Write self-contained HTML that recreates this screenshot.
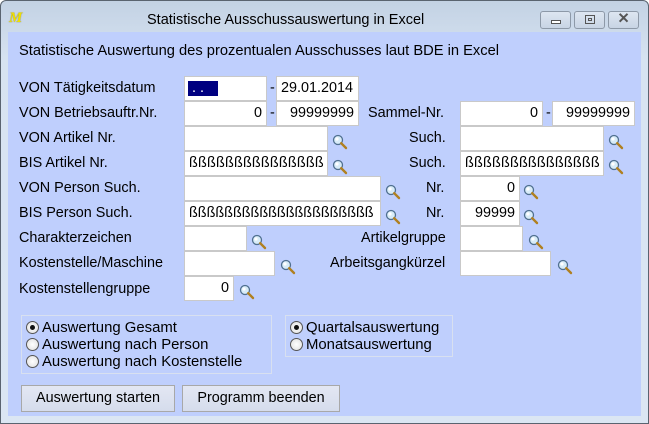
<!DOCTYPE html>
<html><head><meta charset="utf-8"><style>
*{margin:0;padding:0;box-sizing:border-box}
body{width:649px;height:424px;overflow:hidden;background:#fff;font-family:"Liberation Sans",Arial,sans-serif;font-size:14.4px;color:#000}
#win{position:absolute;left:0;top:0;width:649px;height:424px;border:1px solid #5a6470;border-radius:6px 6px 0 0;background:linear-gradient(#c3d2e4,#d7e3f1 60px,#dbe6f3)}
#client{position:absolute;left:8px;top:32px;width:633px;height:384px;background:#bfcffd}
.t{position:absolute;white-space:nowrap;line-height:16px}
.f{position:absolute;background:#fff;border:1px solid #c9c9c9;height:25px;line-height:23px;padding:0 4px;white-space:nowrap;overflow:hidden}
.r{text-align:right}
.ic{position:absolute;width:16px;height:16px}
.grp{position:absolute;border:1px solid #d8e0f0}
.rb{position:absolute;width:13px;height:13px;border-radius:50%;border:1px solid #555;background:radial-gradient(#fff,#ddd)}
.rb.on::after{content:"";position:absolute;left:3px;top:3px;width:5px;height:5px;border-radius:50%;background:#111}
.rl{font-size:14.9px}
.btn{position:absolute;height:27px;border:1px solid #a8a8a8;background:linear-gradient(#e3e7f3,#d5dcec);text-align:center;line-height:25px;font-size:14.4px}
.wb{position:absolute;top:10px;height:18px;border:1px solid #8d99a8;border-radius:3px;background:linear-gradient(#dde6f1,#c8d4e4)}
</style></head><body>
<div id="win">
<div class="t" style="left:8px;top:9px;font-family:'Liberation Serif',serif;font-weight:bold;font-style:italic;color:#f0e000;font-size:15px;text-shadow:0 0 1px #665">M</div>
<div class="t" style="left:146px;top:11px;font-size:14.5px">Statistische Ausschussauswertung in Excel</div>
<div class="wb" style="left:539px;width:31px"><div style="position:absolute;left:10px;top:8px;width:10px;height:4px;border:1px solid #555;background:#fff"></div></div>
<div class="wb" style="left:573px;width:31px"><div style="position:absolute;left:10px;top:3px;width:10px;height:9px;border:1px solid #555;"><div style="margin:2px;height:3px;border:1px solid #555"></div></div></div>
<div class="wb" style="left:607px;width:31px;text-align:center;line-height:15px;color:#555;font-weight:bold">✕</div>
</div>
<div id="client"></div>
<svg width="0" height="0" style="position:absolute"><defs><g id="mg"><circle cx="6" cy="6" r="4.5" fill="#d8ecf8" stroke="#507090" stroke-width="1.3"/><circle cx="5" cy="5" r="1.6" fill="#fff"/><line x1="9.2" y1="9.2" x2="14" y2="14" stroke="#b08020" stroke-width="2.4" stroke-linecap="round"/></g></defs></svg>
<div class="t" style="left:19px;top:43px;font-size:14.7px">Statistische Auswertung des prozentualen Ausschusses laut BDE in Excel</div>

<div class="t" style="left:19px;top:80px">VON Tätigkeitsdatum</div>
<div class="f" style="left:184px;top:76px;width:83px"><span style="display:inline-block;background:#000080;color:#fff;width:30px;height:15px;line-height:15px;vertical-align:middle;margin-left:-1px">&nbsp;.&nbsp;.</span></div>
<div class="t" style="left:270px;top:80px">-</div>
<div class="f" style="left:276px;top:76px;width:83px">29.01.2014</div>

<div class="t" style="left:19px;top:105px">VON Betriebsauftr.Nr.</div>
<div class="f r" style="left:184px;top:101px;width:83px">0</div>
<div class="t" style="left:270px;top:105px">-</div>
<div class="f r" style="left:276px;top:101px;width:83px">99999999</div>
<div class="t" style="left:368px;top:105px">Sammel-Nr.</div>
<div class="f r" style="left:460px;top:101px;width:83px">0</div>
<div class="t" style="left:546px;top:105px">-</div>
<div class="f r" style="left:552px;top:101px;width:83px">99999999</div>

<div class="t" style="left:19px;top:130px">VON Artikel Nr.</div>
<div class="f" style="left:184px;top:126px;width:144px"></div>
<svg class="ic" style="left:332px;top:134px"><use href="#mg"/></svg>
<div class="t" style="left:409px;top:130px">Such.</div>
<div class="f" style="left:460px;top:126px;width:144px"></div>
<svg class="ic" style="left:608px;top:134px"><use href="#mg"/></svg>

<div class="t" style="left:19px;top:155px">BIS Artikel Nr.</div>
<div class="f" style="left:184px;top:151px;width:144px;letter-spacing:0.2px">ßßßßßßßßßßßßßßß</div>
<svg class="ic" style="left:332px;top:159px"><use href="#mg"/></svg>
<div class="t" style="left:409px;top:155px">Such.</div>
<div class="f" style="left:460px;top:151px;width:144px;letter-spacing:0.2px">ßßßßßßßßßßßßßßß</div>
<svg class="ic" style="left:608px;top:159px"><use href="#mg"/></svg>

<div class="t" style="left:19px;top:180px">VON Person Such.</div>
<div class="f" style="left:184px;top:176px;width:197px"></div>
<svg class="ic" style="left:385px;top:184px"><use href="#mg"/></svg>
<div class="t" style="left:426px;top:180px">Nr.</div>
<div class="f r" style="left:460px;top:176px;width:60px">0</div>
<svg class="ic" style="left:523px;top:184px"><use href="#mg"/></svg>

<div class="t" style="left:19px;top:205px">BIS Person Such.</div>
<div class="f" style="left:184px;top:201px;width:197px">ßßßßßßßßßßßßßßßßßßßßß</div>
<svg class="ic" style="left:385px;top:209px"><use href="#mg"/></svg>
<div class="t" style="left:426px;top:205px">Nr.</div>
<div class="f r" style="left:460px;top:201px;width:60px">99999</div>
<svg class="ic" style="left:523px;top:209px"><use href="#mg"/></svg>

<div class="t" style="left:19px;top:230px">Charakterzeichen</div>
<div class="f" style="left:184px;top:226px;width:63px"></div>
<svg class="ic" style="left:251px;top:234px"><use href="#mg"/></svg>
<div class="t" style="left:361px;top:230px">Artikelgruppe</div>
<div class="f" style="left:460px;top:226px;width:63px"></div>
<svg class="ic" style="left:528px;top:234px"><use href="#mg"/></svg>

<div class="t" style="left:19px;top:255px">Kostenstelle/Maschine</div>
<div class="f" style="left:184px;top:251px;width:91px"></div>
<svg class="ic" style="left:280px;top:259px"><use href="#mg"/></svg>
<div class="t" style="left:330px;top:255px">Arbeitsgangkürzel</div>
<div class="f" style="left:460px;top:251px;width:91px"></div>
<svg class="ic" style="left:557px;top:259px"><use href="#mg"/></svg>

<div class="t" style="left:19px;top:281px">Kostenstellengruppe</div>
<div class="f r" style="left:184px;top:276px;width:50px">0</div>
<svg class="ic" style="left:239px;top:284px"><use href="#mg"/></svg>

<div class="grp" style="left:21px;top:315px;width:251px;height:59px"></div>
<div class="rb on" style="left:26px;top:321px"></div><div class="t rl" style="left:42px;top:320px">Auswertung Gesamt</div>
<div class="rb" style="left:26px;top:338px"></div><div class="t rl" style="left:42px;top:337px">Auswertung nach Person</div>
<div class="rb" style="left:26px;top:355px"></div><div class="t rl" style="left:42px;top:354px">Auswertung nach Kostenstelle</div>

<div class="grp" style="left:285px;top:315px;width:168px;height:42px"></div>
<div class="rb on" style="left:290px;top:321px"></div><div class="t rl" style="left:306px;top:320px">Quartalsauswertung</div>
<div class="rb" style="left:290px;top:338px"></div><div class="t rl" style="left:306px;top:337px">Monatsauswertung</div>

<div class="btn" style="left:21px;top:385px;width:154px">Auswertung starten</div>
<div class="btn" style="left:182px;top:385px;width:158px">Programm beenden</div>
</body></html>
